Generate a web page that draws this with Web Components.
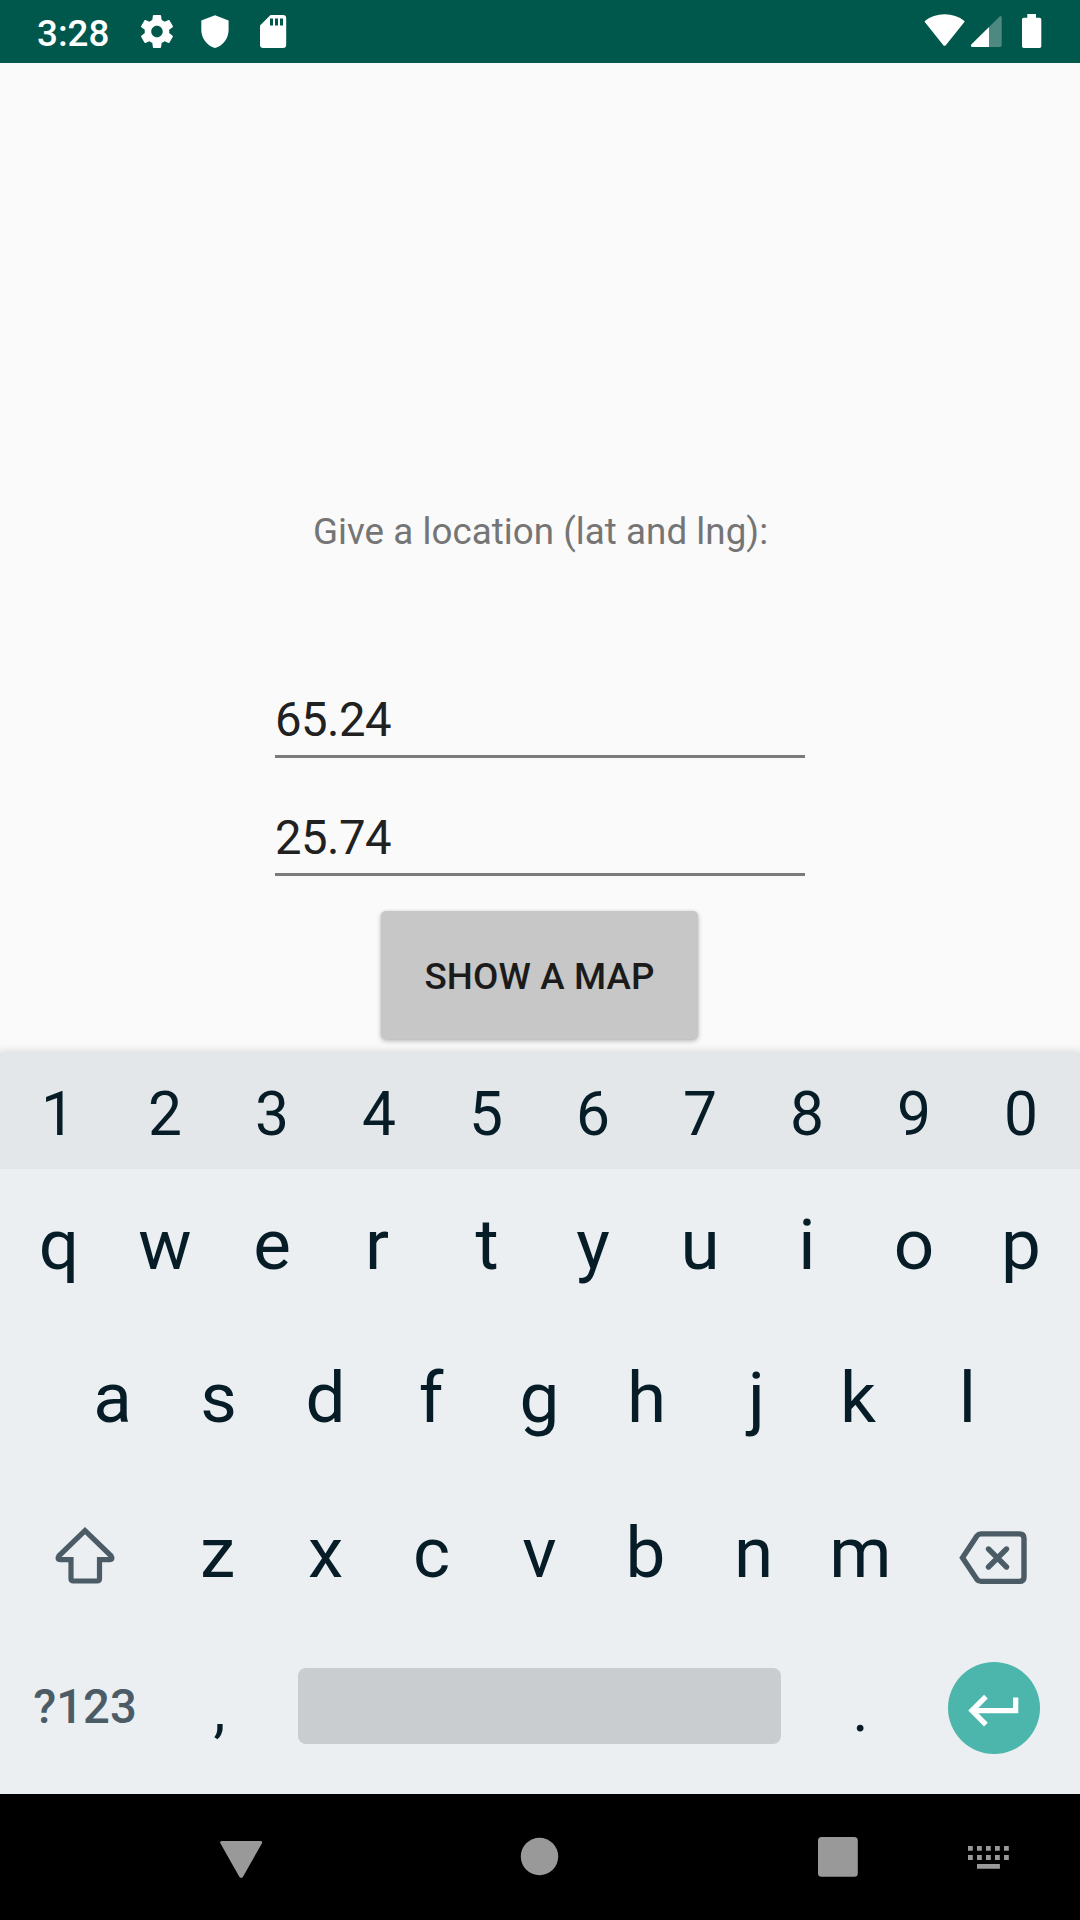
<!DOCTYPE html>
<html lang="en">
<head>
<meta charset="utf-8">
<title>Location</title>
<style>
html,body{margin:0;padding:0}
body{width:1080px;height:1920px;overflow:hidden;background:#fafafa;font-family:Roboto,sans-serif}
</style>
</head>
<body>
<phone-screen></phone-screen>
<script>
const define = (name, html) => {
  const t = document.createElement('template');
  t.innerHTML = html;
  customElements.define(name, class extends HTMLElement {
    constructor() {
      super();
      this.attachShadow({ mode: 'open' }).appendChild(t.content.cloneNode(true));
    }
  });
};

define('status-bar', `
<style>
:host{display:flex;box-sizing:border-box;height:63px;background:#00574b;color:#fff;align-items:center;padding:0 35px 0 37px;justify-content:space-between}
div{display:flex;height:63px}
.time{font-size:36.75px;font-weight:500;line-height:67px;width:100px;white-space:nowrap}
svg{display:block;fill:#fff}
</style>
<div><span class="time">3:28</span>
<svg width="160" height="63" viewBox="137 0 160 63">
<g transform="translate(137.3 11.8) scale(1.64)"><path d="M19.43 12.98c.04-.32.07-.64.07-.98s-.03-.66-.07-.98l2.11-1.65c.19-.15.24-.42.12-.64l-2-3.46c-.12-.22-.39-.3-.61-.22l-2.49 1c-.52-.4-1.08-.73-1.69-.98l-.38-2.65C14.46 2.18 14.25 2 14 2h-4c-.25 0-.46.18-.49.42l-.38 2.65c-.61.25-1.17.59-1.69.98l-2.49-1c-.23-.09-.49 0-.61.22l-2 3.46c-.13.22-.07.49.12.64l2.11 1.65c-.04.32-.07.65-.07.98s.03.66.07.98l-2.11 1.65c-.19.15-.24.42-.12.64l2 3.46c.12.22.39.3.61.22l2.49-1c.52.4 1.08.73 1.69.98l.38 2.65c.03.24.24.42.49.42h4c.25 0 .46-.18.49-.42l.38-2.65c.61-.25 1.17-.59 1.69-.98l2.49 1c.23.09.49 0 .61-.22l2-3.46c.12-.22.07-.49-.12-.64l-2.11-1.65zM12 15.5c-1.93 0-3.5-1.57-3.5-3.5s1.57-3.5 3.5-3.5 3.5 1.57 3.5 3.5-1.57 3.5-3.5 3.5z"/></g>
<path d="M215 15.2L228.6 20.4V30C228.6 38.5 223 45.8 215 48C207 45.8 201.300 38.500 201.300 30V20.400Z"/>
<path fill-rule="evenodd" d="M270.500 15H283Q286.200 15 286.200 18.200V44.800Q286.200 48 283 48H263.200Q260 48 260 44.800V25.500ZM270 18.500V25.500H273V18.500ZM275 18.500V25.500H278V18.500ZM280 18.500V25.500H283V18.500Z"/>
</svg></div>
<div><svg width="125" height="63" viewBox="920 0 125 63">
<path d="M924.800 22Q924.400 21.300 925.200 20.700Q933 14.200 944.600 14.200T964.100 20.700Q964.900 21.300 964.400 22L946 44.900Q944.600 46.700 943.100 44.900Z"/>
<path opacity=".3" d="M989 27L999.700 16.500Q1001.700 15.300 1001.700 17.800V45.300Q1001.700 47 1000 47H989Z"/>
<path d="M989 27V47H972Q970 46 971.500 44.300Z"/>
<path d="M1027.300 14H1036V17.800H1039.700Q1041.300 17.800 1041.300 19.400V46.200Q1041.300 47.900 1039.700 47.900H1023.700Q1022 47.900 1022 46.200V19.400Q1022 17.800 1023.700 17.800H1027.300Z"/>
</svg></div>`);

define('coord-field', `
<style>
:host{display:block;box-sizing:border-box;width:530px;height:68px;border-bottom:3px solid #7b7b7b;font-size:47.25px;line-height:60px;letter-spacing:-.5px;color:#212121}
</style><slot></slot>`);

define('raised-button', `
<style>
:host{display:block;width:317px;height:128px;border-radius:5px;background:#c6c7c6;box-shadow:0 2px 5px rgba(0,0,0,.28),0 0 2px rgba(0,0,0,.1);color:#1b1b1b;font-size:36.75px;font-weight:500;letter-spacing:.13px;line-height:131px;text-align:center;white-space:nowrap}
</style><slot></slot>`);

define('location-form', `
<style>
:host{display:flex;flex-direction:column;align-items:center;box-sizing:border-box;height:990px;padding-top:443px;background:#fafafa}
.label{font-size:36.75px;line-height:51px;height:51px;letter-spacing:.04px;padding-left:1px;color:#757575;white-space:nowrap}
.a{margin-top:133px}.b{margin-top:50px}
raised-button{margin-top:35px;margin-right:1px}
</style>
<div class="label">Give a location (lat and lng):</div>
<coord-field class="a">65.24</coord-field>
<coord-field class="b">25.74</coord-field>
<raised-button>SHOW A MAP</raised-button>`);

define('key-cap', `
<style>
:host{display:flex;box-sizing:border-box;width:107px;height:100%;justify-content:center;align-items:center}
</style><slot></slot>`);

define('soft-keyboard', `
<style>
:host{display:block;position:relative;height:741px;background:#ebeff2;color:#061d27;box-shadow:0 0 8px 2px rgba(0,0,0,.13);font-size:71px;line-height:80px}
.row{display:flex;justify-content:center;box-sizing:border-box;padding-right:1px}
.num{height:116px;background:#e3e7ea;font-size:60.5px;padding-top:7px}
.r2{height:149px;padding-top:2px}.r3{height:159px}.r4{height:151px}.r5{height:166px;align-items:center}
.wide{width:160px}
svg{display:block}
.r4 .shift{padding-top:6px}
.r4 .back{padding-top:9px;padding-right:2px}
.sym{font-size:47.25px;font-weight:500;color:#4b5c66;padding-bottom:9px}
.punct{font-size:60.5px}
.comma{padding-left:2px}
.space{width:483px;height:76px;border-radius:8px;background:#c9cdd0;margin:0 26px 10px}
.enter{display:flex;box-sizing:border-box;width:92px;height:92px;padding:6px 0 0 1px;border-radius:50%;background:#4db6ac;align-items:center;justify-content:center}
.go{padding-bottom:6px}
</style>
<div class="row num"></div>
<div class="row r2"></div>
<div class="row r3"></div>
<div class="row r4"></div>
<div class="row r5">
<key-cap class="wide sym">?123</key-cap>
<key-cap class="punct comma">,</key-cap>
<div class="space"></div>
<key-cap class="punct">.</key-cap>
<key-cap class="wide go"><div class="enter"><svg width="63.200" height="63.200" viewBox="0 0 24 24" fill="#fff"><path d="M19 7v4H5.830l3.580-3.590L8 6l-6 6 6 6 1.410-1.410L5.830 13H21V7z"/></svg></div></key-cap>
</div>`);

const shift = `<svg width="62" height="62" viewBox="54 1525 62 62" fill="none" stroke="#4b5c66" stroke-width="5.200"><path d="M85 1530.700L111 1555.800Q113.500 1559.500 109.500 1559.700H99.500V1578.500Q99.500 1581 97 1581H73.500Q71 1581 71 1578.500V1559.700H60.500Q56.500 1559.500 59 1555.800Z"/></svg>`;
const back = `<svg width="72" height="62" viewBox="957 1527 72 62" fill="none" stroke="#4b5c66" stroke-width="5.400"><path d="M962.500 1558.700L977 1536.800Q978.500 1534.900 981 1534.900H1019.500Q1024 1534.900 1024 1539.400V1578Q1024 1582.400 1019.500 1582.400H981Q978.500 1582.400 977 1580.500Z"/><path stroke-linecap="round" d="M988.500 1550L1006.500 1568M1006.500 1550L988.500 1568"/></svg>`;
const nudge = { q: 1, r: -2, t: 1, a: 1, f: -1.5, j: 3, k: -2.5, z: -1, c: -1, b: -1 };
const keys = s => [...s].map(c => {
  const n = nudge[c] || 0;
  const pad = n ? ` style="padding-${n > 0 ? 'left' : 'right'}:${Math.abs(n) * 2}px"` : '';
  return `<key-cap${pad}>${c}</key-cap>`;
}).join('');

define('nav-bar', `
<style>
:host{display:block;position:relative;height:126px;background:#000}
svg{display:block;fill:#999}
</style>
<svg width="1080" height="126" viewBox="0 1794 1080 126">
<path d="M222 1841H260.300Q263 1841 261.800 1843.400L243.300 1876.300Q241.200 1879.600 239 1876.300L220.500 1843.400Q219.300 1841 222 1841Z"/>
<circle cx="539.500" cy="1856.500" r="18.700"/>
<rect x="818" y="1837" width="39.800" height="39.800" rx="3.500"/>
<path d="M968 1846h4.800v4.800h-4.800zM977 1846h4.800v4.800h-4.800zM986 1846h4.800v4.800h-4.800zM995 1846h4.800v4.800h-4.800zM1004 1846h4.800v4.800h-4.800zM968 1855.100h4.800v4.800h-4.800zM977 1855.100h4.800v4.800h-4.800zM986 1855.100h4.800v4.800h-4.800zM995 1855.100h4.800v4.800h-4.800zM1004 1855.100h4.800v4.800h-4.800zM977 1864.100h22.900v4.700h-22.900z"/>
</svg>`);

define('phone-screen', `
<style>:host{display:flex;flex-direction:column;width:1080px;height:1920px}</style>
<status-bar></status-bar><location-form></location-form><soft-keyboard></soft-keyboard><nav-bar></nav-bar>`);

const kb = document.querySelector('phone-screen').shadowRoot.querySelector('soft-keyboard').shadowRoot;
kb.querySelector('.num').innerHTML = keys('1234567890');
kb.querySelector('.r2').innerHTML = keys('qwertyuiop');
kb.querySelector('.r3').innerHTML = keys('asdfghjkl');
kb.querySelector('.r4').innerHTML = `<key-cap class="wide shift">${shift}</key-cap>${keys('zxcvbnm')}<key-cap class="wide back">${back}</key-cap>`;
</script>
</body>
</html>
